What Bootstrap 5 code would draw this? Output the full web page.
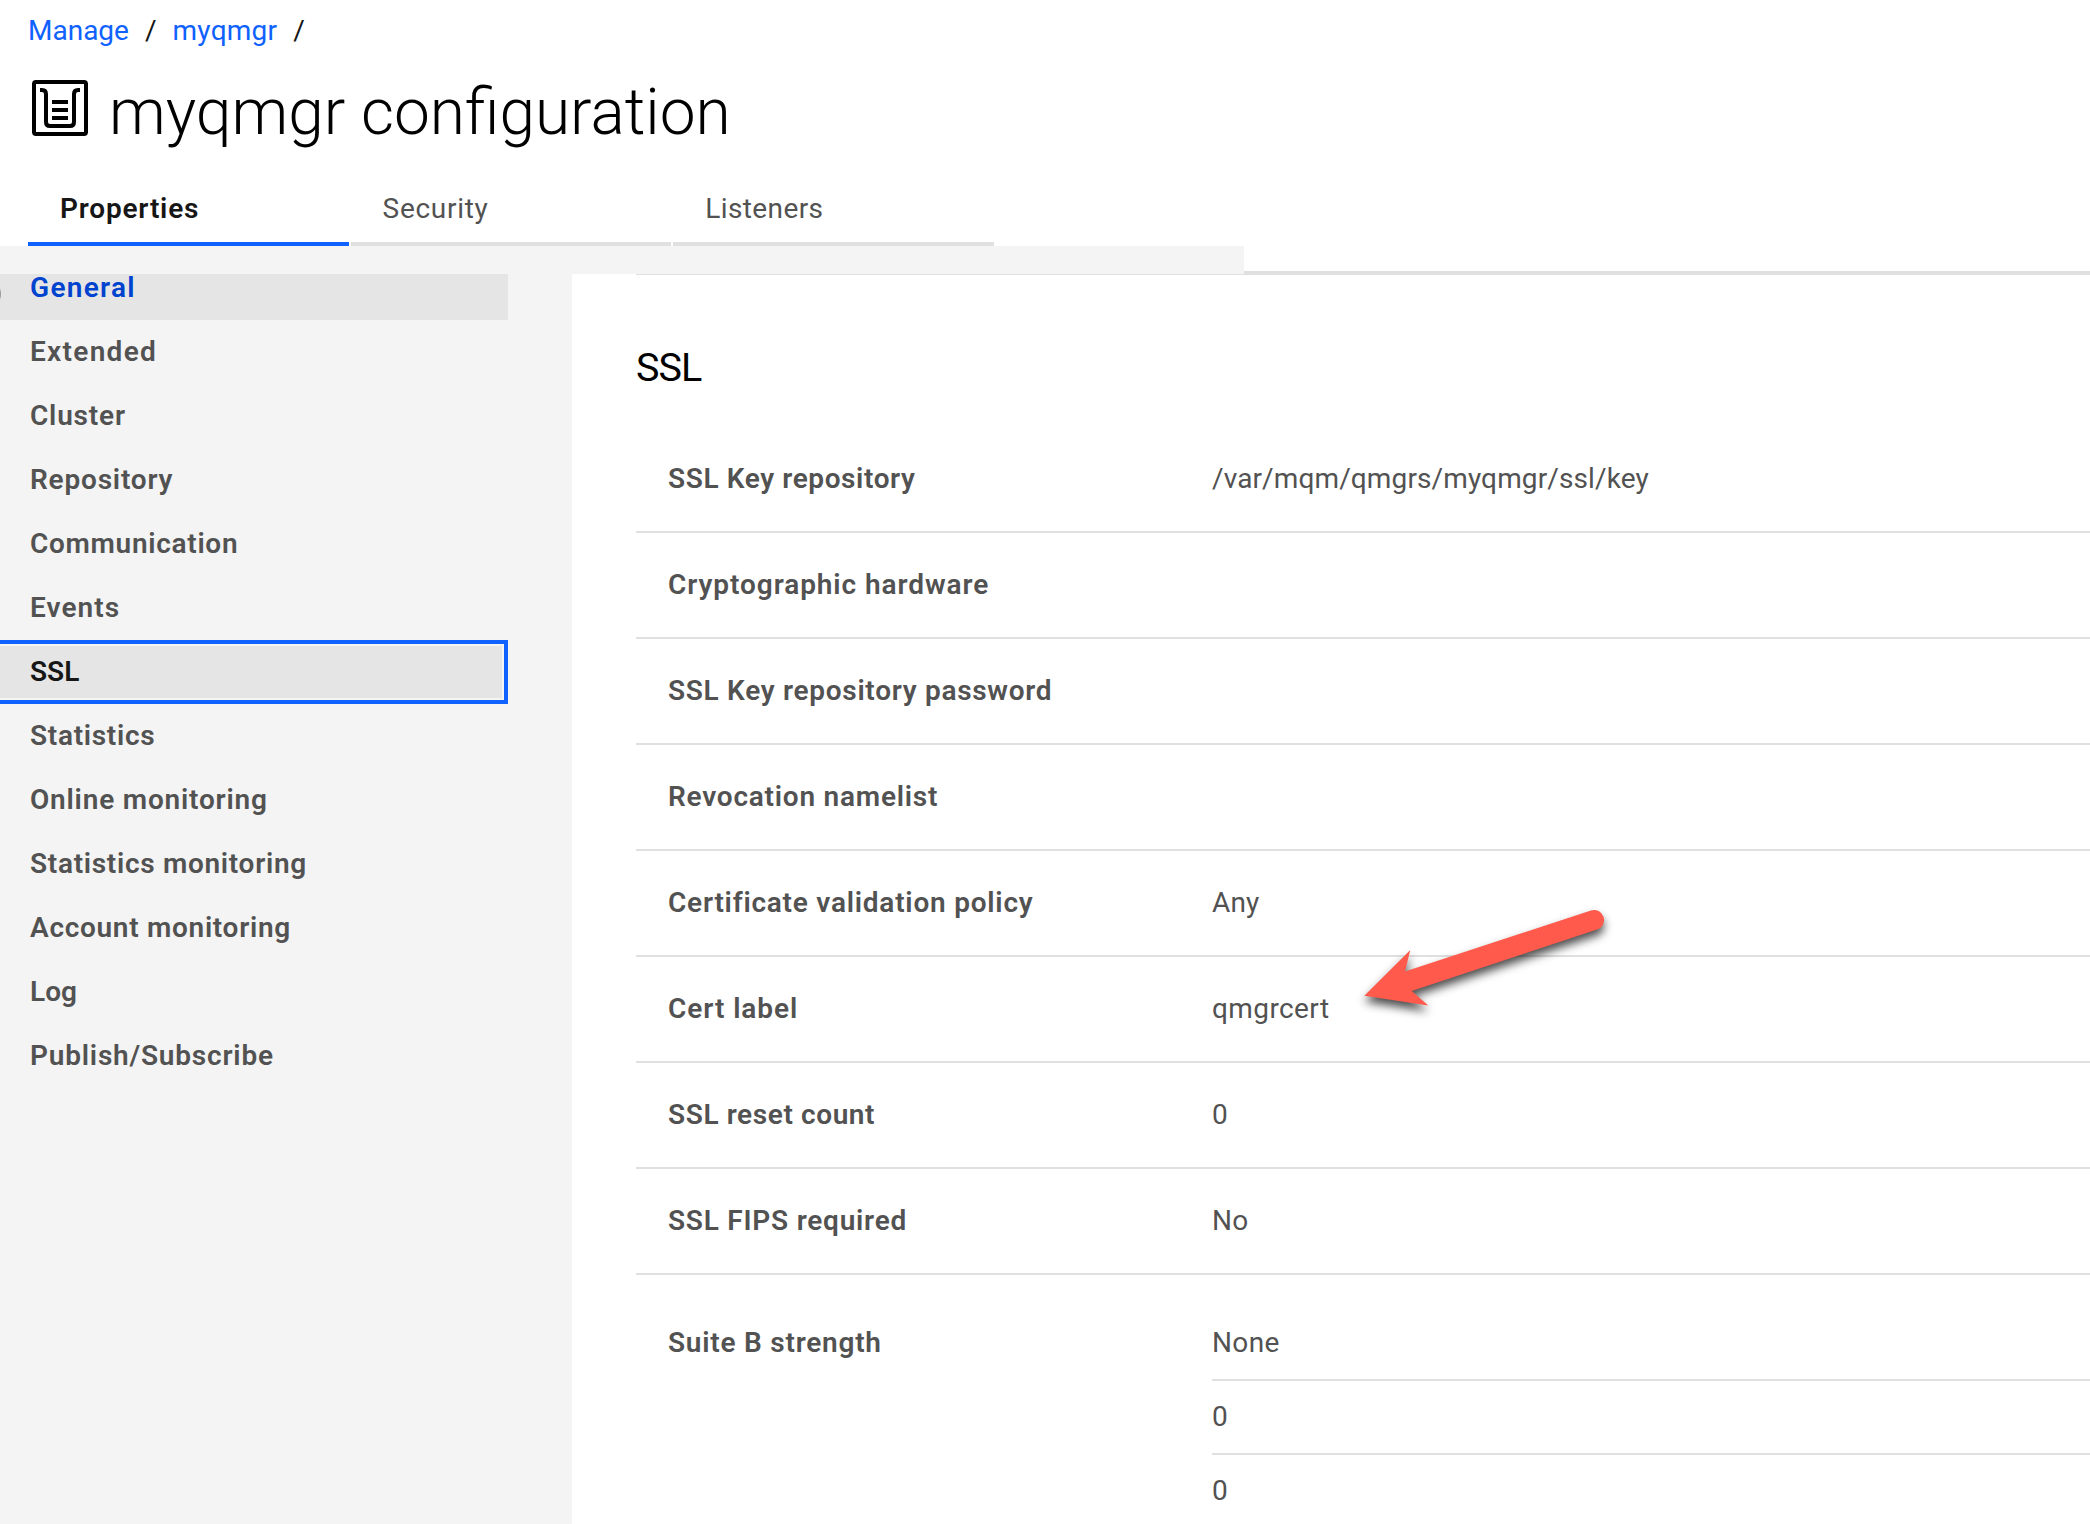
<!DOCTYPE html>
<html lang="en">
<head>
<meta charset="utf-8">
<meta name="viewport" content="width=device-width, initial-scale=1">
<title>myqmgr configuration</title>
<link rel="stylesheet" href="https://cdn.jsdelivr.net/npm/bootstrap@5.3.0/dist/css/bootstrap.min.css">
<style>
  html, body { height: 100%; }
  body { font-family: Roboto, "Open Sans", sans-serif; font-size: 28px; line-height: 36px; color: #525252; background: #fff; overflow: hidden; }
  .page { height: 1524px; }

  /* tracking steps */
  .ls-0 { letter-spacing: 0 !important; }
  .ls-1 { letter-spacing: .12px !important; }
  .ls-4 { letter-spacing: .4px !important; }
  .ls-5 { letter-spacing: .6px !important; }
  .ls-7 { letter-spacing: .7px !important; }
  .ls-8 { letter-spacing: .8px !important; }
  .ls-9 { letter-spacing: .93px !important; }
  .ls-11 { letter-spacing: 1.05px !important; }
  .ls-14 { letter-spacing: 1.3px !important; }

  .page-head { height: 246px; }
  .crumbs { height: 60px; padding: 13px 0 0 28px; --bs-breadcrumb-divider: "/"; --bs-breadcrumb-item-padding-x: 16px; --bs-breadcrumb-divider-color: #161616; font-size: 28px; }
  .crumbs .breadcrumb-item { letter-spacing: 0; }
  .crumbs .breadcrumb-item + .breadcrumb-item a { letter-spacing: .25px; }
  .crumbs .breadcrumb-item a { color: #0f62fe; text-decoration: none; }
  .title-row { height: 110px; padding: 20px 0 0 32px; gap: 21px; }
  .page-title { font-size: 64px; font-weight: 300; line-height: 76px; margin: -5px 0 0; color: #000; }
  .tabs-bar { gap: 2px; padding-left: 28px; }
  .tabs-bar .nav-link { width: 320.6px; height: 76px; border-radius: 0; border: 0; border-bottom: 4px solid #e0e0e0; padding: 21px 32px 0; color: #525252; }
  .tabs-bar .nav-link.active { color: #161616; border-color: #0f62fe; font-weight: 600; }

  .strip { height: 28px; }
  .strip-fill { width: 1244px; background: #f4f4f4; }
  .strip-rule { height: 29px; border-bottom: 4px solid #e0e0e0; }

  .side { width: 572px; background: #f4f4f4; }
  .side-list { width: 508px; }
  .side-list .nav-link { height: 64px; padding: 14px 0 0 30px; font-weight: 600; color: #525252; letter-spacing: .8px; border-radius: 0; white-space: nowrap; }
  .side-list .is-hovered { background: #e5e5e5; color: #0043ce; height: 46px; padding-top: 0; line-height: 28px; position: relative; }
  .side-list .is-hovered::before { content: ""; position: absolute; left: -11px; top: 10px; width: 12px; height: 20px; border-radius: 50%; border: 2px solid #999; }
  .side-list .is-current { background: #e5e5e5; color: #161616; border: 4px solid #0f62fe; border-left: 0; padding-top: 10px; box-shadow: inset -2px 0 #f4f4f4, inset 0 2px #f4f4f4, inset 0 -2px #f4f4f4; }

  .panel { margin-left: 64px; }
  .panel-rule { width: 609px; height: 1px; background: #e0e0e0; }
  .panel h2 { font-size: 39.5px; line-height: 48px; font-weight: 400; color: #000; letter-spacing: -1px; margin: 69px 0 35px; }
  .prop { height: 106px; padding: 34px 0 0 32px; border-bottom: 2px solid #e0e0e0; white-space: nowrap; }
  .prop-name { width: 544px; font-weight: 600; letter-spacing: .77px; }
  .prop-last { height: auto; border: 0; padding-top: 50px; }
  .sub-value { height: 56px; border-bottom: 2px solid #e0e0e0; }
  .sub-value + .sub-value { height: 74px; padding-top: 18px; }

  .pointer { left: 1340px; top: 880px; width: 300px; height: 160px; filter: drop-shadow(0 6px 5px rgba(0,0,0,.7)); }
</style>
</head>
<body>
<div class="page d-flex flex-column position-relative overflow-hidden">
  <header class="page-head flex-shrink-0">
    <nav aria-label="breadcrumb">
      <ol class="breadcrumb crumbs mb-0">
        <li class="breadcrumb-item"><a href="#">Manage</a></li>
        <li class="breadcrumb-item"><a href="#">myqmgr</a></li>
        <li class="breadcrumb-item"></li>
      </ol>
    </nav>
    <div class="title-row d-flex align-items-start">
      <svg width="56" height="56" viewBox="0 0 56 56" fill="none" stroke="#000" stroke-width="4" aria-hidden="true">
        <rect x="2" y="2" width="52" height="52" rx="2"/>
        <path d="M8 10h2q4 0 4 4v28q0 4 4 4h20q4 0 4-4v-28q0-4 4-4h2M20 22h16M20 30h16M20 38h16"/>
      </svg>
      <h1 class="page-title">myqmgr configuration</h1>
    </div>
    <div class="nav tabs-bar flex-nowrap">
      <a class="nav-link active ls-8" href="#">Properties</a>
      <a class="nav-link ls-7" href="#">Security</a>
      <a class="nav-link ls-4" href="#">Listeners</a>
    </div>
  </header>

  <div class="strip d-flex flex-shrink-0">
    <div class="strip-fill"></div>
    <div class="strip-rule flex-grow-1"></div>
  </div>

  <div class="d-flex flex-grow-1">
    <aside class="side flex-shrink-0">
      <nav class="nav flex-column side-list">
        <a class="nav-link is-hovered ls-14" href="#">General</a>
        <a class="nav-link ls-14" href="#">Extended</a>
        <a class="nav-link" href="#">Cluster</a>
        <a class="nav-link" href="#">Repository</a>
        <a class="nav-link ls-7" href="#">Communication</a>
        <a class="nav-link ls-11" href="#">Events</a>
        <a class="nav-link is-current ls-0" href="#">SSL</a>
        <a class="nav-link ls-7" href="#">Statistics</a>
        <a class="nav-link" href="#">Online monitoring</a>
        <a class="nav-link ls-7" href="#">Statistics monitoring</a>
        <a class="nav-link ls-7" href="#">Account monitoring</a>
        <a class="nav-link ls-0" href="#">Log</a>
        <a class="nav-link" href="#">Publish/Subscribe</a>
      </nav>
    </aside>

    <main class="panel flex-grow-1">
      <div class="panel-rule"></div>
      <h2>SSL</h2>
      <div class="prop d-flex"><div class="prop-name ls-5">SSL Key repository</div><div class="ls-1">/var/mqm/qmgrs/myqmgr/ssl/key</div></div>
      <div class="prop d-flex"><div class="prop-name ls-9">Cryptographic hardware</div></div>
      <div class="prop d-flex"><div class="prop-name ls-7">SSL Key repository password</div></div>
      <div class="prop d-flex"><div class="prop-name">Revocation namelist</div></div>
      <div class="prop d-flex"><div class="prop-name">Certificate validation policy</div><div class="ls-1">Any</div></div>
      <div class="prop d-flex"><div class="prop-name ls-9">Cert label</div><div class="ls-4">qmgrcert</div></div>
      <div class="prop d-flex"><div class="prop-name ls-5">SSL reset count</div><div>0</div></div>
      <div class="prop d-flex"><div class="prop-name">SSL FIPS required</div><div class="ls-4">No</div></div>
      <div class="prop prop-last d-flex">
        <div class="prop-name">Suite B strength</div>
        <div class="flex-grow-1">
          <div class="sub-value ls-4">None</div>
          <div class="sub-value">0</div>
          <div class="sub-value">0</div>
        </div>
      </div>
    </main>
  </div>

  <svg class="pointer position-absolute" viewBox="0 0 300 160" aria-hidden="true">
    <path fill="#ff5a4c" d="M24.3 115.7 70.3 70 65 91.5 251 30.4A10 10 0 0 1 257 49.6L71.7 111 88.3 125.5Z"/>
  </svg>
</div>
<script src="https://cdn.jsdelivr.net/npm/bootstrap@5.3.0/dist/js/bootstrap.bundle.min.js"></script>
</body>
</html>
